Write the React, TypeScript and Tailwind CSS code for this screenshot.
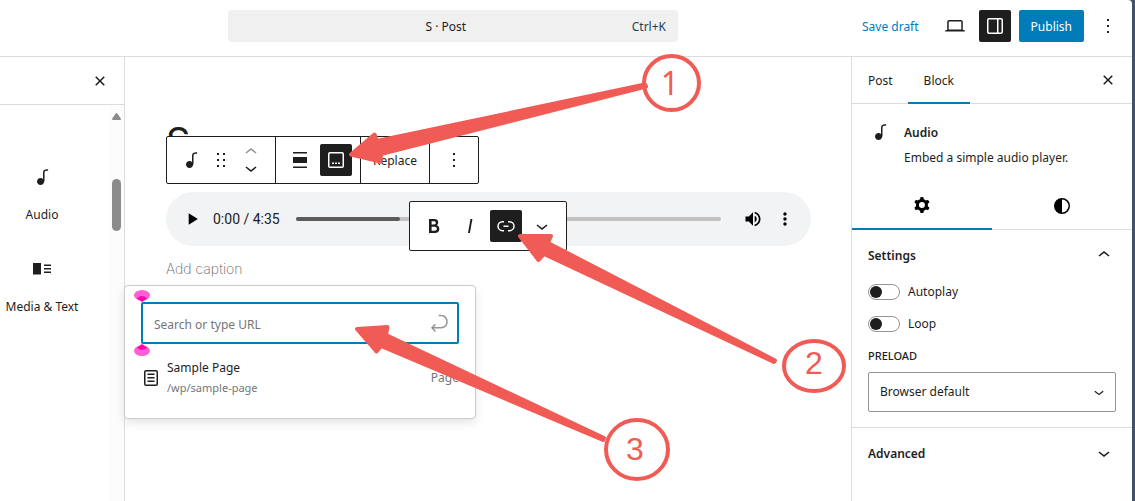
import React from 'react';

const ICONS = {
  audio:
    'M17.7 4.3c-1.2 0-2.8 0-3.8 1-.6.6-.9 1.5-.9 2.6V14c-.6-.6-1.5-1-2.5-1C8.6 13 7 14.6 7 16.5S8.6 20 10.5 20c1.5 0 2.8-1 3.3-2.3.5-.8.7-1.8.7-2.5V7.9c0-.7.2-1.2.5-1.6.6-.6 1.8-.6 2.8-.6h.3V4.3h-.4z',
  drag: 'M8 7h2V5H8v2zm0 6h2v-2H8v2zm0 6h2v-2H8v2zm6-14v2h2V5h-2zm0 8h2v-2h-2v2zm0 6h2v-2h-2v2z',
  up: 'M6.5 12.4L12 8l5.5 4.4-.9 1.2L12 10l-4.5 3.6-1-1.2z',
  down: 'M17.5 11.6L12 16l-5.5-4.4.9-1.2L12 14l4.5-3.6 1 1.2z',
  align: 'M19 5.5H5V4h14v1.5ZM19 20H5v-1.5h14V20ZM5 9h14v6H5V9Z',
  caption:
    'M6 5.5h12a.5.5 0 01.5.5v12a.5.5 0 01-.5.5H6a.5.5 0 01-.5-.5V6a.5.5 0 01.5-.5zM4 6a2 2 0 012-2h12a2 2 0 012 2v12a2 2 0 01-2 2H6a2 2 0 01-2-2V6zm4 10h2v-1.5H8V16zm5 0h-2v-1.5h2V16zm1 0h2v-1.5h-2V16z',
  more: 'M13 19h-2v-2h2v2zm0-6h-2v-2h2v2zm0-6h-2V5h2v2z',
  bold: 'M14.7 11.3c1-.6 1.5-1.6 1.5-3 0-2.3-1.3-3.4-4-3.4H7v14h5.8c1.4 0 2.5-.3 3.3-1 .8-.7 1.2-1.7 1.2-2.9.1-1.9-.8-3.1-2.6-3.7zm-5.1-4h2.3c.6 0 1.1.1 1.4.4.3.3.5.7.5 1.2s-.2 1-.5 1.2c-.3.3-.8.4-1.4.4H9.6V7.3zm4.6 9c-.4.3-1 .4-1.7.4H9.6v-3.9h2.9c.7 0 1.3.2 1.7.5.4.3.6.8.6 1.5s-.2 1.2-.6 1.5z',
  italic: 'M12.5 5L10 19h1.9l2.5-14z',
  link: 'M10 17.389H8.444A5.194 5.194 0 1 1 8.444 7H10v1.5H8.444a3.694 3.694 0 0 0 0 7.389H10v1.5ZM14 7h1.556a5.194 5.194 0 0 1 0 10.39H14v-1.5h1.556a3.694 3.694 0 0 0 0-7.39H14V7Zm-4.5 6h5v-1.5h-5V13Z',
  close:
    'M12 13.06l3.712 3.713 1.061-1.06L13.061 12l3.712-3.712-1.06-1.06L12 10.938 8.288 7.227l-1.061 1.06L10.939 12l-3.712 3.712 1.06 1.061L12 13.061z',
  laptop:
    'M20.5 16h-.7V8c0-1.1-.9-2-2-2H6.2c-1.1 0-2 .9-2 2v8h-.7c-.8 0-1.5.7-1.5 1.5h20c0-.8-.7-1.5-1.5-1.5zM5.7 8c0-.3.2-.5.5-.5h11.6c.3 0 .5.2.5.5v7.6H5.7V8z',
  drawer:
    'M18 4H6c-1.1 0-2 .9-2 2v12c0 1.1.9 2 2 2h12c1.1 0 2-.9 2-2V6c0-1.1-.9-2-2-2zm-4 14.5H6c-.3 0-.5-.2-.5-.5V6c0-.3.2-.5.5-.5h8v13zm4.5-.5c0 .3-.2.5-.5.5h-2.5v-13H18c.3 0 .5.2.5.5v12z',
  mediaText: 'M3 6v11.5h8V6H3Zm11 3h7V7.5h-7V9Zm7 3.5h-7V11h7v1.5ZM14 16h7v-1.5h-7V16Z',
  enter:
    'm6.734 16.106 2.176-2.38-1.093-1.028-3.846 4.158 3.846 4.157 1.093-1.027-2.176-2.38h2.811c1.125 0 2.25.03 3.374 0 1.428-.001 3.362-.25 4.963-1.277 1.66-1.065 2.868-2.906 2.868-5.859 0-2.479-1.327-4.896-3.65-5.93-1.82-.813-3.044-.8-4.806-.788l-.567.002v1.5c.184 0 .368 0 .553-.002 1.82-.007 2.704-.014 4.21.657 1.854.827 2.76 2.657 2.76 4.561 0 2.472-.973 3.824-2.178 4.596-1.258.807-2.864 1.04-4.163 1.04h-.02c-1.115.03-2.229 0-3.344 0H6.734Z',
  page: 'M15.5 7.5h-7V9h7V7.5Zm-7 3.5h7v1.5h-7V11Zm7 3.5h-7V16h7v-1.5ZM17 4H7a2 2 0 0 0-2 2v12a2 2 0 0 0 2 2h10a2 2 0 0 0 2-2V6a2 2 0 0 0-2-2ZM7 5.5h10a.5.5 0 0 1 .5.5v12a.5.5 0 0 1-.5.5H7a.5.5 0 0 1-.5-.5V6a.5.5 0 0 1 .5-.5Z',
  styles: 'M20 12a8 8 0 1 1-16 0 8 8 0 0 1 16 0Zm-1.5 0a6.5 6.5 0 0 1-6.5 6.5v-13a6.5 6.5 0 0 1 6.5 6.5Z',
  cog: 'M10.289 4.836A1 1 0 0111.275 4h1.306a1 1 0 01.987.836l.244 1.466c.787.26 1.503.679 2.108 1.218l1.393-.522a1 1 0 011.216.437l.653 1.13a1 1 0 01-.23 1.273l-1.148.944a6.025 6.025 0 010 2.435l1.149.946a1 1 0 01.23 1.272l-.653 1.13a1 1 0 01-1.216.437l-1.394-.522c-.605.54-1.32.958-2.108 1.218l-.244 1.466a1 1 0 01-.987.836h-1.306a1 1 0 01-.986-.836l-.244-1.466a5.995 5.995 0 01-2.108-1.218l-1.394.522a1 1 0 01-1.217-.436l-.653-1.131a1 1 0 01.23-1.272l1.149-.946a6.026 6.026 0 010-2.435l-1.148-.944a1 1 0 01-.23-1.272l.653-1.131a1 1 0 011.217-.437l1.393.522a5.994 5.994 0 012.108-1.218l.244-1.466zM14.929 12a3 3 0 11-6 0 3 3 0 016 0z',
  play: 'M8 5v14l11-7z',
  volume:
    'M3 9v6h4l5 5V4L7 9H3zm13.5 3c0-1.77-1.02-3.29-2.5-4.03v8.05c1.48-.73 2.5-2.25 2.5-4.02zM14 3.23v2.06c2.89.86 5 3.54 5 6.71s-2.11 5.85-5 6.71v2.06c4.01-.91 7-4.49 7-8.77s-2.99-7.86-7-8.77z',
  dots: 'M12 8c1.1 0 2-.9 2-2s-.9-2-2-2-2 .9-2 2 .9 2 2 2zm0 2c-1.1 0-2 .9-2 2s.9 2 2 2 2-.9 2-2-.9-2-2-2zm0 6c-1.1 0-2 .9-2 2s.9 2 2 2 2-.9 2-2-.9-2-2-2z',
};

type IconName = keyof typeof ICONS;

function Icon({ name, className = 'size-6' }: { name: IconName; className?: string }) {
  return (
    <svg viewBox="0 0 24 24" className={`block shrink-0 ${className}`} fill="currentColor" aria-hidden="true">
      <path fillRule="evenodd" clipRule="evenodd" d={ICONS[name]} />
    </svg>
  );
}

function IconButton({ name, label, active = false }: { name: IconName; label: string; active?: boolean }) {
  return (
    <button
      type="button"
      aria-label={label}
      className={`flex size-8 items-center justify-center rounded-xs ${active ? 'bg-[#1e1e1e] text-white' : ''}`}
    >
      <Icon name={name} />
    </button>
  );
}

function Header() {
  return (
    <header className="flex h-[57px] items-center justify-between border-b border-[#ddd] pb-1 pr-2 pl-[228px]">
      <button type="button" className="flex h-8 w-[450px] items-center rounded bg-[#f0f0f0] pt-0.5 pr-3 pl-8">
        <span className="flex-1 text-center">S · Post</span>
        <span className="text-[#1d3f5e]">Ctrl+K</span>
      </button>
      <div className="flex items-center gap-2">
        <button type="button" className="h-8 px-3 pt-0.5 text-[#007cba]">
          Save draft
        </button>
        <IconButton name="laptop" label="View" />
        <IconButton name="drawer" label="Settings" active />
        <button type="button" className="h-8 rounded-xs bg-[#007cba] px-3 pt-0.5 text-white">
          Publish
        </button>
        <IconButton name="more" label="Options" />
      </div>
    </header>
  );
}

function InserterItem({ name, label }: { name: IconName; label: string }) {
  return (
    <button type="button" className="flex h-[92px] w-full flex-col items-center gap-4 whitespace-nowrap">
      <Icon name={name} />
      <span className="leading-5">{label}</span>
    </button>
  );
}

function Inserter() {
  return (
    <aside className="flex w-[125px] shrink-0 flex-col border-r border-[#ddd]">
      <div className="flex h-12 items-center justify-end border-b border-[#ddd] pr-2">
        <IconButton name="close" label="Close block inserter" />
      </div>
      <div className="flex flex-1">
        <div className="w-[84px] pt-[60px]">
          <InserterItem name="audio" label="Audio" />
          <InserterItem name="mediaText" label="Media & Text" />
        </div>
        <div className="ml-auto flex w-[15px] flex-col items-center bg-[#fcfcfc] pt-2">
          <svg viewBox="0 0 9 7" className="h-[7px] w-[9px]" fill="#8b8b8b" aria-hidden="true">
            <path d="M3.7.6a1 1 0 0 1 1.6 0L8.8 5.600a.9.9 0 0 1-.7 1.400H.9a.9.9 0 0 1-.7-1.400z" />
          </svg>
          <div className="mt-[59px] h-[52px] w-[9px] rounded-full bg-[#8b8b8b]" />
        </div>
      </div>
    </aside>
  );
}

function BlockToolbar() {
  return (
    <div className="absolute bottom-full left-0 mb-2 flex h-12 divide-x divide-[#1e1e1e] rounded-xs border border-[#1e1e1e] bg-white">
      <div className="flex items-center px-2">
        <IconButton name="audio" label="Audio" />
        <button type="button" aria-label="Drag" className="flex w-7 justify-center">
          <Icon name="drag" />
        </button>
        <div className="flex w-8 flex-col items-center">
          <button type="button" aria-label="Move up" className="flex h-4 items-center text-[#949494]">
            <Icon name="up" />
          </button>
          <button type="button" aria-label="Move down" className="flex h-4 items-center">
            <Icon name="down" />
          </button>
        </div>
      </div>
      <div className="flex items-center gap-1 px-2">
        <IconButton name="align" label="Align" />
        <IconButton name="caption" label="Remove caption" active />
      </div>
      <button type="button" className="px-3 pt-0.5">
        Replace
      </button>
      <div className="flex items-center px-2">
        <IconButton name="more" label="Options" />
      </div>
    </div>
  );
}

function FormatToolbar() {
  return (
    <div className="absolute top-[9px] left-[243px] flex h-[50px] items-center gap-1 rounded-xs border border-[#1e1e1e] bg-white px-2">
      <IconButton name="bold" label="Bold" />
      <IconButton name="italic" label="Italic" />
      <IconButton name="link" label="Link" active />
      <IconButton name="down" label="More" />
    </div>
  );
}

function Handle({ className }: { className: string }) {
  return (
    <svg viewBox="0 0 16 12" className={`absolute -left-[7px] h-3 w-4 ${className}`} aria-hidden="true">
      <ellipse cx="8" cy="5.200" rx="8" ry="5.200" fill="#ff5fd2" />
      <path d="M3 8.400Q8 3.500 13 8.400L8 12z" fill="#ff00b4" />
    </svg>
  );
}

function LinkPopover() {
  return (
    <div className="absolute top-[93px] -left-[42px] w-[352px] rounded border border-[#ccc] bg-white p-4 pb-5 shadow-[0_4px_10px_rgba(0,0,0,0.1)]">
      <div className="relative flex items-center">
        <input
          type="text"
          aria-label="Link"
          placeholder="Search or type URL"
          className="h-[42px] w-full rounded-xs border-2 border-[#007cba] bg-white pt-0.5 pr-12 pl-[11px] outline-none placeholder:text-[#757575]"
        />
        <button type="button" aria-label="Submit" className="absolute right-2 text-[#949494]">
          <Icon name="enter" />
        </button>
        <Handle className="bottom-full" />
        <Handle className="top-full rotate-180" />
      </div>
      <button type="button" className="mt-[14px] flex w-full items-center gap-1 text-left">
        <Icon name="page" className="-ml-0.5 size-6" />
        <span className="flex-1 leading-5">
          <span className="block">Sample Page</span>
          <span className="block text-[11px] leading-5 text-[#757575]">/wp/sample-page</span>
        </span>
        <span className="text-[#757575]">Page</span>
      </button>
    </div>
  );
}

function Canvas() {
  return (
    <main className="min-w-0 flex-1 pt-[60px] pr-10 pl-[41px]">
      <h1 className="mb-[27px] font-['Inter'] text-[38px] leading-[48px]">S</h1>
      <div className="relative">
        <div className="flex h-[54px] items-center rounded-full bg-[#f1f3f4] px-4 text-black">
          <button type="button" aria-label="Play">
            <Icon name="play" className="size-5" />
          </button>
          <span className="ml-[11px] font-['Roboto'] text-sm text-[#202124]">0:00 / 4:35</span>
          <div className="ml-4 h-1 flex-1 rounded-full bg-[#c1c1c1]">
            <div className="h-full rounded-full bg-[#5c5c5c]" style={{ width: '24.5%' }} />
          </div>
          <button type="button" aria-label="Mute" className="ml-[22px]">
            <Icon name="volume" className="size-5" />
          </button>
          <button type="button" aria-label="More" className="ml-3">
            <Icon name="dots" className="size-5" />
          </button>
        </div>
        <p className="mt-[13px] font-['Inter'] text-sm leading-5 font-extralight text-[#666]">Add caption</p>
        <BlockToolbar />
        <FormatToolbar />
        <LinkPopover />
      </div>
    </main>
  );
}

function Toggle({ label }: { label: string }) {
  return (
    <label className="flex h-8 items-center gap-2">
      <input
        type="checkbox"
        className="flex h-4 w-8 appearance-none items-center rounded-full border border-[#949494] bg-white pl-px before:size-3 before:rounded-full before:bg-[#1e1e1e]"
      />
      {label}
    </label>
  );
}

function Sidebar() {
  return (
    <aside className="w-[281px] shrink-0 border-l border-[#ddd]">
      <div className="flex h-[47px] items-center justify-between border-b border-[#ddd] pr-2">
        <div className="flex h-[47px]">
          <button type="button" className="pt-0.5 pr-[15px] pl-4">
            Post
          </button>
          <button type="button" className="border-b-2 border-[#007cba] px-4 pt-1">
            Block
          </button>
        </div>
        <IconButton name="close" label="Close settings" />
      </div>
      <div className="flex gap-3 px-4 pt-4 pb-3">
        <Icon name="audio" />
        <div>
          <h2 className="leading-[25px] font-semibold">Audio</h2>
          <p className="leading-[25px] whitespace-nowrap">Embed a simple audio player.</p>
        </div>
      </div>
      <div className="grid h-12 grid-cols-2 border-b border-[#ddd] text-black">
        <button type="button" aria-label="Settings" className="-mb-px flex items-center justify-center border-b-2 border-[#007cba]">
          <Icon name="cog" />
        </button>
        <button type="button" aria-label="Styles" className="flex items-center justify-center">
          <Icon name="styles" />
        </button>
      </div>
      <section className="border-b border-[#ddd] px-4 pb-[15px]">
        <button type="button" className="flex h-[50px] w-full items-center justify-between font-semibold">
          <span className="pt-0.5">Settings</span>
          <Icon name="up" />
        </button>
        <div className="-mt-1">
          <Toggle label="Autoplay" />
          <Toggle label="Loop" />
        </div>
        <label htmlFor="preload" className="mt-1.5 mb-1.5 block text-[11px] leading-5 font-medium uppercase">
          Preload
        </label>
        <div className="relative flex items-center">
          <select id="preload" className="h-10 w-full appearance-none rounded-xs border border-[#949494] bg-white pr-8 pl-[11px]">
            <option>Browser default</option>
          </select>
          <Icon name="down" className="pointer-events-none absolute right-[7px] size-5" />
        </div>
      </section>
      <button type="button" className="flex h-[50px] w-full items-center justify-between px-4 font-semibold">
        <span className="pt-0.5">Advanced</span>
        <Icon name="down" />
      </button>
    </aside>
  );
}

function Annotations() {
  return (
    <svg
      viewBox="0 0 1135 501"
      className="pointer-events-none absolute top-0 left-0 h-[501px] w-[1135px]"
      fill="#f15b55"
      stroke="#f15b55"
      strokeLinejoin="round"
    >
      <g strokeWidth="4">
        <path d="M351 154.500L374.500 134.500L377 141L645 84.500L646 86.500L381 154L380.500 161.500Z" />
        <path d="M520 236L551 236L548 243L775 360.500L774 362L544 254L538.500 260Z" />
        <path d="M357 329L387.500 327L386 335L604 438L603 440L381 346L376.500 351.500Z" />
      </g>
      <g fill="none" strokeWidth="4">
        <ellipse cx="671.500" cy="83" rx="27.500" ry="27" />
        <ellipse cx="814" cy="366" rx="30" ry="25" />
        <ellipse cx="637" cy="449.500" rx="31" ry="29.500" />
      </g>
      <g stroke="none" fontSize="32" textAnchor="middle">
        <text x="670" y="95" fontFamily="'Noto Sans', sans-serif">1</text>
        <text x="814" y="374" fontFamily="'Liberation Sans', sans-serif">2</text>
        <text x="635" y="460" fontFamily="'Liberation Sans', sans-serif">3</text>
      </g>
    </svg>
  );
}

export default function App() {
  return (
    <div className="relative min-h-screen overflow-hidden bg-[#42526b] pr-[3px] font-['Noto_Sans',sans-serif] text-xs text-[#1e1e1e]">
      <div className="flex min-h-screen flex-col rounded-tr bg-white">
        <Header />
        <div className="flex flex-1">
          <Inserter />
          <Canvas />
          <Sidebar />
        </div>
      </div>
      <Annotations />
    </div>
  );
}
